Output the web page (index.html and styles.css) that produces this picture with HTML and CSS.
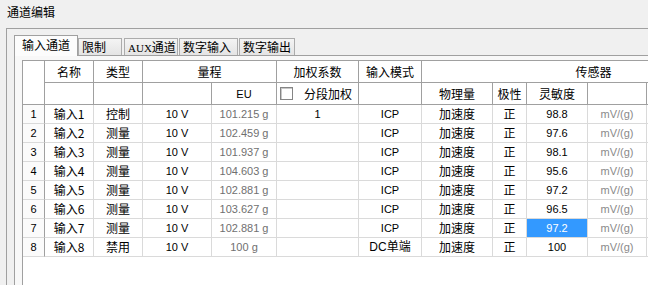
FILE: index.html
```html
<!DOCTYPE html>
<html lang="zh">
<head>
<meta charset="utf-8">
<title>通道编辑</title>
<link rel="stylesheet" href="styles.css">
</head>
<body>
<div class="title">通道编辑</div>
<div class="frame">
  <div class="tabs">
    <div class="tab active w1">输入通道</div>
    <div class="tab w2">限制</div>
    <div class="tab w3 g2"><span class="aux">AUX</span>通道</div>
    <div class="tab w4 g1">数字输入</div>
    <div class="tab w5 g1">数字输出</div>
  </div>
  <div class="page">
    <div class="grid">
      <div class="c h corner"></div>
      <div class="c h">名称</div>
      <div class="c h">类型</div>
      <div class="c h span2">量程</div>
      <div class="c h">加权系数</div>
      <div class="c h">输入模式</div>
      <div class="c h span5">传感器</div>

      <div class="c h"></div>
      <div class="c h"></div>
      <div class="c h"></div>
      <div class="c h lat">EU</div>
      <div class="c h left"><span class="check"></span><span class="checklabel">分段加权</span></div>
      <div class="c h"></div>
      <div class="c h">物理量</div>
      <div class="c h">极性</div>
      <div class="c h">灵敏度</div>
      <div class="c h"></div>
      <div class="c h"></div>

      <div class="c rn lat">1</div><div class="c">输入1</div><div class="c">控制</div><div class="c lat">10 V</div><div class="c lat eu">101.215 g</div><div class="c lat">1</div><div class="c lat">ICP</div><div class="c">加速度</div><div class="c">正</div><div class="c lat">98.8</div><div class="c lat unit">mV/(g)</div><div class="c"></div>
      <div class="c rn lat">2</div><div class="c">输入2</div><div class="c">测量</div><div class="c lat">10 V</div><div class="c lat eu">102.459 g</div><div class="c lat"></div><div class="c lat">ICP</div><div class="c">加速度</div><div class="c">正</div><div class="c lat">97.6</div><div class="c lat unit">mV/(g)</div><div class="c"></div>
      <div class="c rn lat">3</div><div class="c">输入3</div><div class="c">测量</div><div class="c lat">10 V</div><div class="c lat eu">101.937 g</div><div class="c lat"></div><div class="c lat">ICP</div><div class="c">加速度</div><div class="c">正</div><div class="c lat">98.1</div><div class="c lat unit">mV/(g)</div><div class="c"></div>
      <div class="c rn lat">4</div><div class="c">输入4</div><div class="c">测量</div><div class="c lat">10 V</div><div class="c lat eu">104.603 g</div><div class="c lat"></div><div class="c lat">ICP</div><div class="c">加速度</div><div class="c">正</div><div class="c lat">95.6</div><div class="c lat unit">mV/(g)</div><div class="c"></div>
      <div class="c rn lat">5</div><div class="c">输入5</div><div class="c">测量</div><div class="c lat">10 V</div><div class="c lat eu">102.881 g</div><div class="c lat"></div><div class="c lat">ICP</div><div class="c">加速度</div><div class="c">正</div><div class="c lat">97.2</div><div class="c lat unit">mV/(g)</div><div class="c"></div>
      <div class="c rn lat">6</div><div class="c">输入6</div><div class="c">测量</div><div class="c lat">10 V</div><div class="c lat eu">103.627 g</div><div class="c lat"></div><div class="c lat">ICP</div><div class="c">加速度</div><div class="c">正</div><div class="c lat">96.5</div><div class="c lat unit">mV/(g)</div><div class="c"></div>
      <div class="c rn lat">7</div><div class="c">输入7</div><div class="c">测量</div><div class="c lat">10 V</div><div class="c lat eu">102.881 g</div><div class="c lat"></div><div class="c lat">ICP</div><div class="c">加速度</div><div class="c">正</div><div class="c lat sel">97.2</div><div class="c lat unit">mV/(g)</div><div class="c"></div>
      <div class="c rn lat">8</div><div class="c">输入8</div><div class="c">禁用</div><div class="c lat">10 V</div><div class="c lat eu">100 g</div><div class="c lat"></div><div class="c mixed">DC单端</div><div class="c">加速度</div><div class="c">正</div><div class="c lat">100</div><div class="c lat unit">mV/(g)</div><div class="c"></div>
    </div>
  </div>
</div>
</body>
</html>
```

FILE: styles.css
```css
html, body {
  margin: 0;
  padding: 0;
}

body {
  width: 648px;
  height: 285px;
  overflow: hidden;
  background: #f0f0f0;
  color: #000;
  font-family: "Noto Sans CJK SC", sans-serif;
  font-size: 12px;
}

.title {
  height: 28px;
  box-sizing: border-box;
  padding: 5px 0 0 7px;
  line-height: 14px;
}

.frame {
  box-sizing: border-box;
  width: 642px;
  height: 257px;
  overflow: hidden;
  margin-left: 6px;
  padding: 6px 0 0 7px;
  border-left: 1px solid #a0a0a0;
  border-top: 1px solid #a0a0a0;
}

.tabs {
  display: flex;
  align-items: flex-end;
  height: 20px;
}

.tab {
  height: 17px;
  box-sizing: border-box;
  border: 1px solid #acacac;
  border-bottom: 0;
  background: linear-gradient(#f4f4f4, #e4e4e4);
  line-height: 15px;
  padding-left: 3px;
  white-space: nowrap;
}

.tab.active {
  position: relative;
  z-index: 1;
  height: 21px;
  margin-bottom: -1px;
  padding-left: 0;
  background: #fcfcfc;
  border-color: #a0a0a0;
  text-align: center;
  line-height: 18px;
}

.aux {
  font-family: "Liberation Serif", serif;
  font-size: 11px;
}

.w1 { width: 64px; }
.w2 { width: 44px; }
.w3 { width: 54px; }
.w4 { width: 59px; }
.w5 { width: 56px; }
.g1 { margin-left: 1px; }
.g2 { margin-left: 2px; }

.page {
  height: 230px;
  border-left: 1px solid #a0a0a0;
  border-top: 1px solid #a0a0a0;
  background: #f8f8f8;
  padding: 4px 0 0 7px;
}

.grid {
  display: grid;
  grid-template-columns: 22px 49px 49px 69px 65px 82px 63px 71px 34px 61px 59px 119px;
  grid-template-rows: 22px 22px repeat(8, 19px);
  align-content: start;
  width: max-content;
  height: 226px;
  background: #fff;
  border-left: 1px solid #a0a0a0;
  border-top: 1px solid #a0a0a0;
}

.c {
  box-sizing: border-box;
  display: flex;
  align-items: center;
  justify-content: center;
  border-right: 1px solid #dadada;
  border-bottom: 1px solid #dadada;
  line-height: 14px;
  white-space: nowrap;
}

.h {
  border-color: #a0a0a0;
}

.corner {
  grid-row: span 2;
}

.span2 {
  grid-column: span 2;
}

.span5 {
  grid-column: span 5;
}

.left {
  justify-content: flex-start;
  padding-left: 3px;
}

.check {
  width: 13px;
  height: 13px;
  box-sizing: border-box;
  border: 1px solid #858585;
  box-shadow: inset 1px 1px 0 #c8c8c8;
  background: #fff;
}

.checklabel {
  margin-left: 11px;
}

.rn {
  background: #fbfbfb;
  border-right-color: #a0a0a0;
}

.lat {
  font-family: "Liberation Sans", Arial, sans-serif;
  font-size: 11px;
}

.mixed {
  font-family: "Liberation Sans", "Noto Sans CJK SC", sans-serif;
  font-size: 12px;
}

.eu {
  color: #707070;
}

.unit {
  color: #8a8a8a;
}

.sel {
  background: #3399ff;
  color: #fff;
}
```
